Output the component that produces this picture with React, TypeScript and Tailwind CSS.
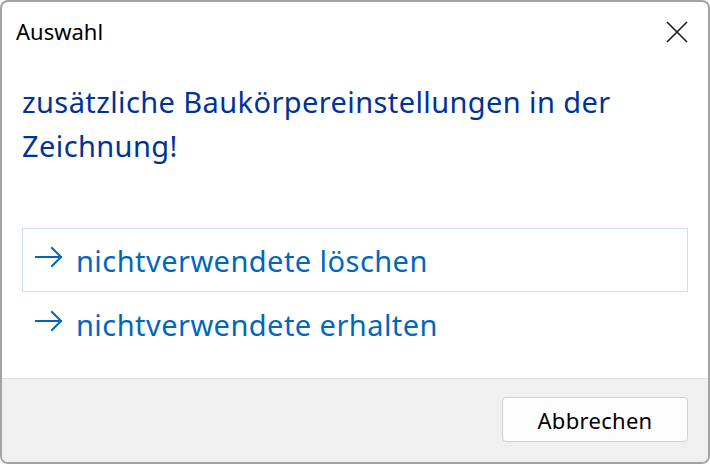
import React from "react";

const font = { fontFamily: '"Noto Sans", "Open Sans", sans-serif' };

function Arrow() {
  return (
    <svg width="28" height="22" viewBox="0 0 28 22" fill="none" className="shrink-0 mt-[17px]">
      <path d="M1 11 H26 M17 2 L26 11 L17 20" stroke="#0067c0" strokeWidth="2" strokeLinecap="square" />
    </svg>
  );
}

function LinkRow({ label, active }: { label: string; active?: boolean }) {
  return (
    <div
      className={
        active
          ? "h-[64px] border border-[#c5e1f5] flex items-start pl-[12px] gap-[13px]"
          : "h-[64px] border border-transparent flex items-start pl-[12px] gap-[13px]"
      }
    >
      <Arrow />
      <span className="mt-[14px] text-[29px] text-[#0067c0] tracking-[0.45px] leading-[36px]">{label}</span>
    </div>
  );
}

export default function App() {
  return (
    <div className="w-[710px] h-[464px] bg-white" style={font}>
      <div className="w-full h-full rounded-[8px] border-2 border-[#a3a3a3] flex flex-col overflow-hidden bg-white">
        <div className="h-[60px] shrink-0 flex items-start justify-between pl-[14px] pr-[20px]">
          <span className="mt-[17px] text-[22px] leading-[24px] text-black">Auswahl</span>
          <svg width="22" height="22" viewBox="0 0 22 22" className="mt-[19px]">
            <path d="M1 1 L21 21 M21 1 L1 21" stroke="#1a1a1a" strokeWidth="1.6" />
          </svg>
        </div>
        <div className="flex-1 flex flex-col px-[20px]">
          <div className="text-[29px] leading-[44px] text-[#003399] tracking-[0.4px] mt-[18px] pr-[40px]">
            zusätzliche Baukörpereinstellungen in der Zeichnung!
          </div>
          <div className="mt-[60px] flex flex-col">
            <LinkRow label="nichtverwendete löschen" active />
            <LinkRow label="nichtverwendete erhalten" />
          </div>
        </div>
        <div className="h-[84px] shrink-0 bg-[#f0f0f0] border-t border-[#dfdfdf] flex items-start justify-end pr-[20px] pt-[18px]">
          <button className="w-[186px] h-[45px] bg-[#fdfdfd] border border-[#d0d0d0] rounded-[4px] text-[22px] leading-[28px] text-black tracking-[0.3px]">
            Abbrechen
          </button>
        </div>
      </div>
    </div>
  );
}
